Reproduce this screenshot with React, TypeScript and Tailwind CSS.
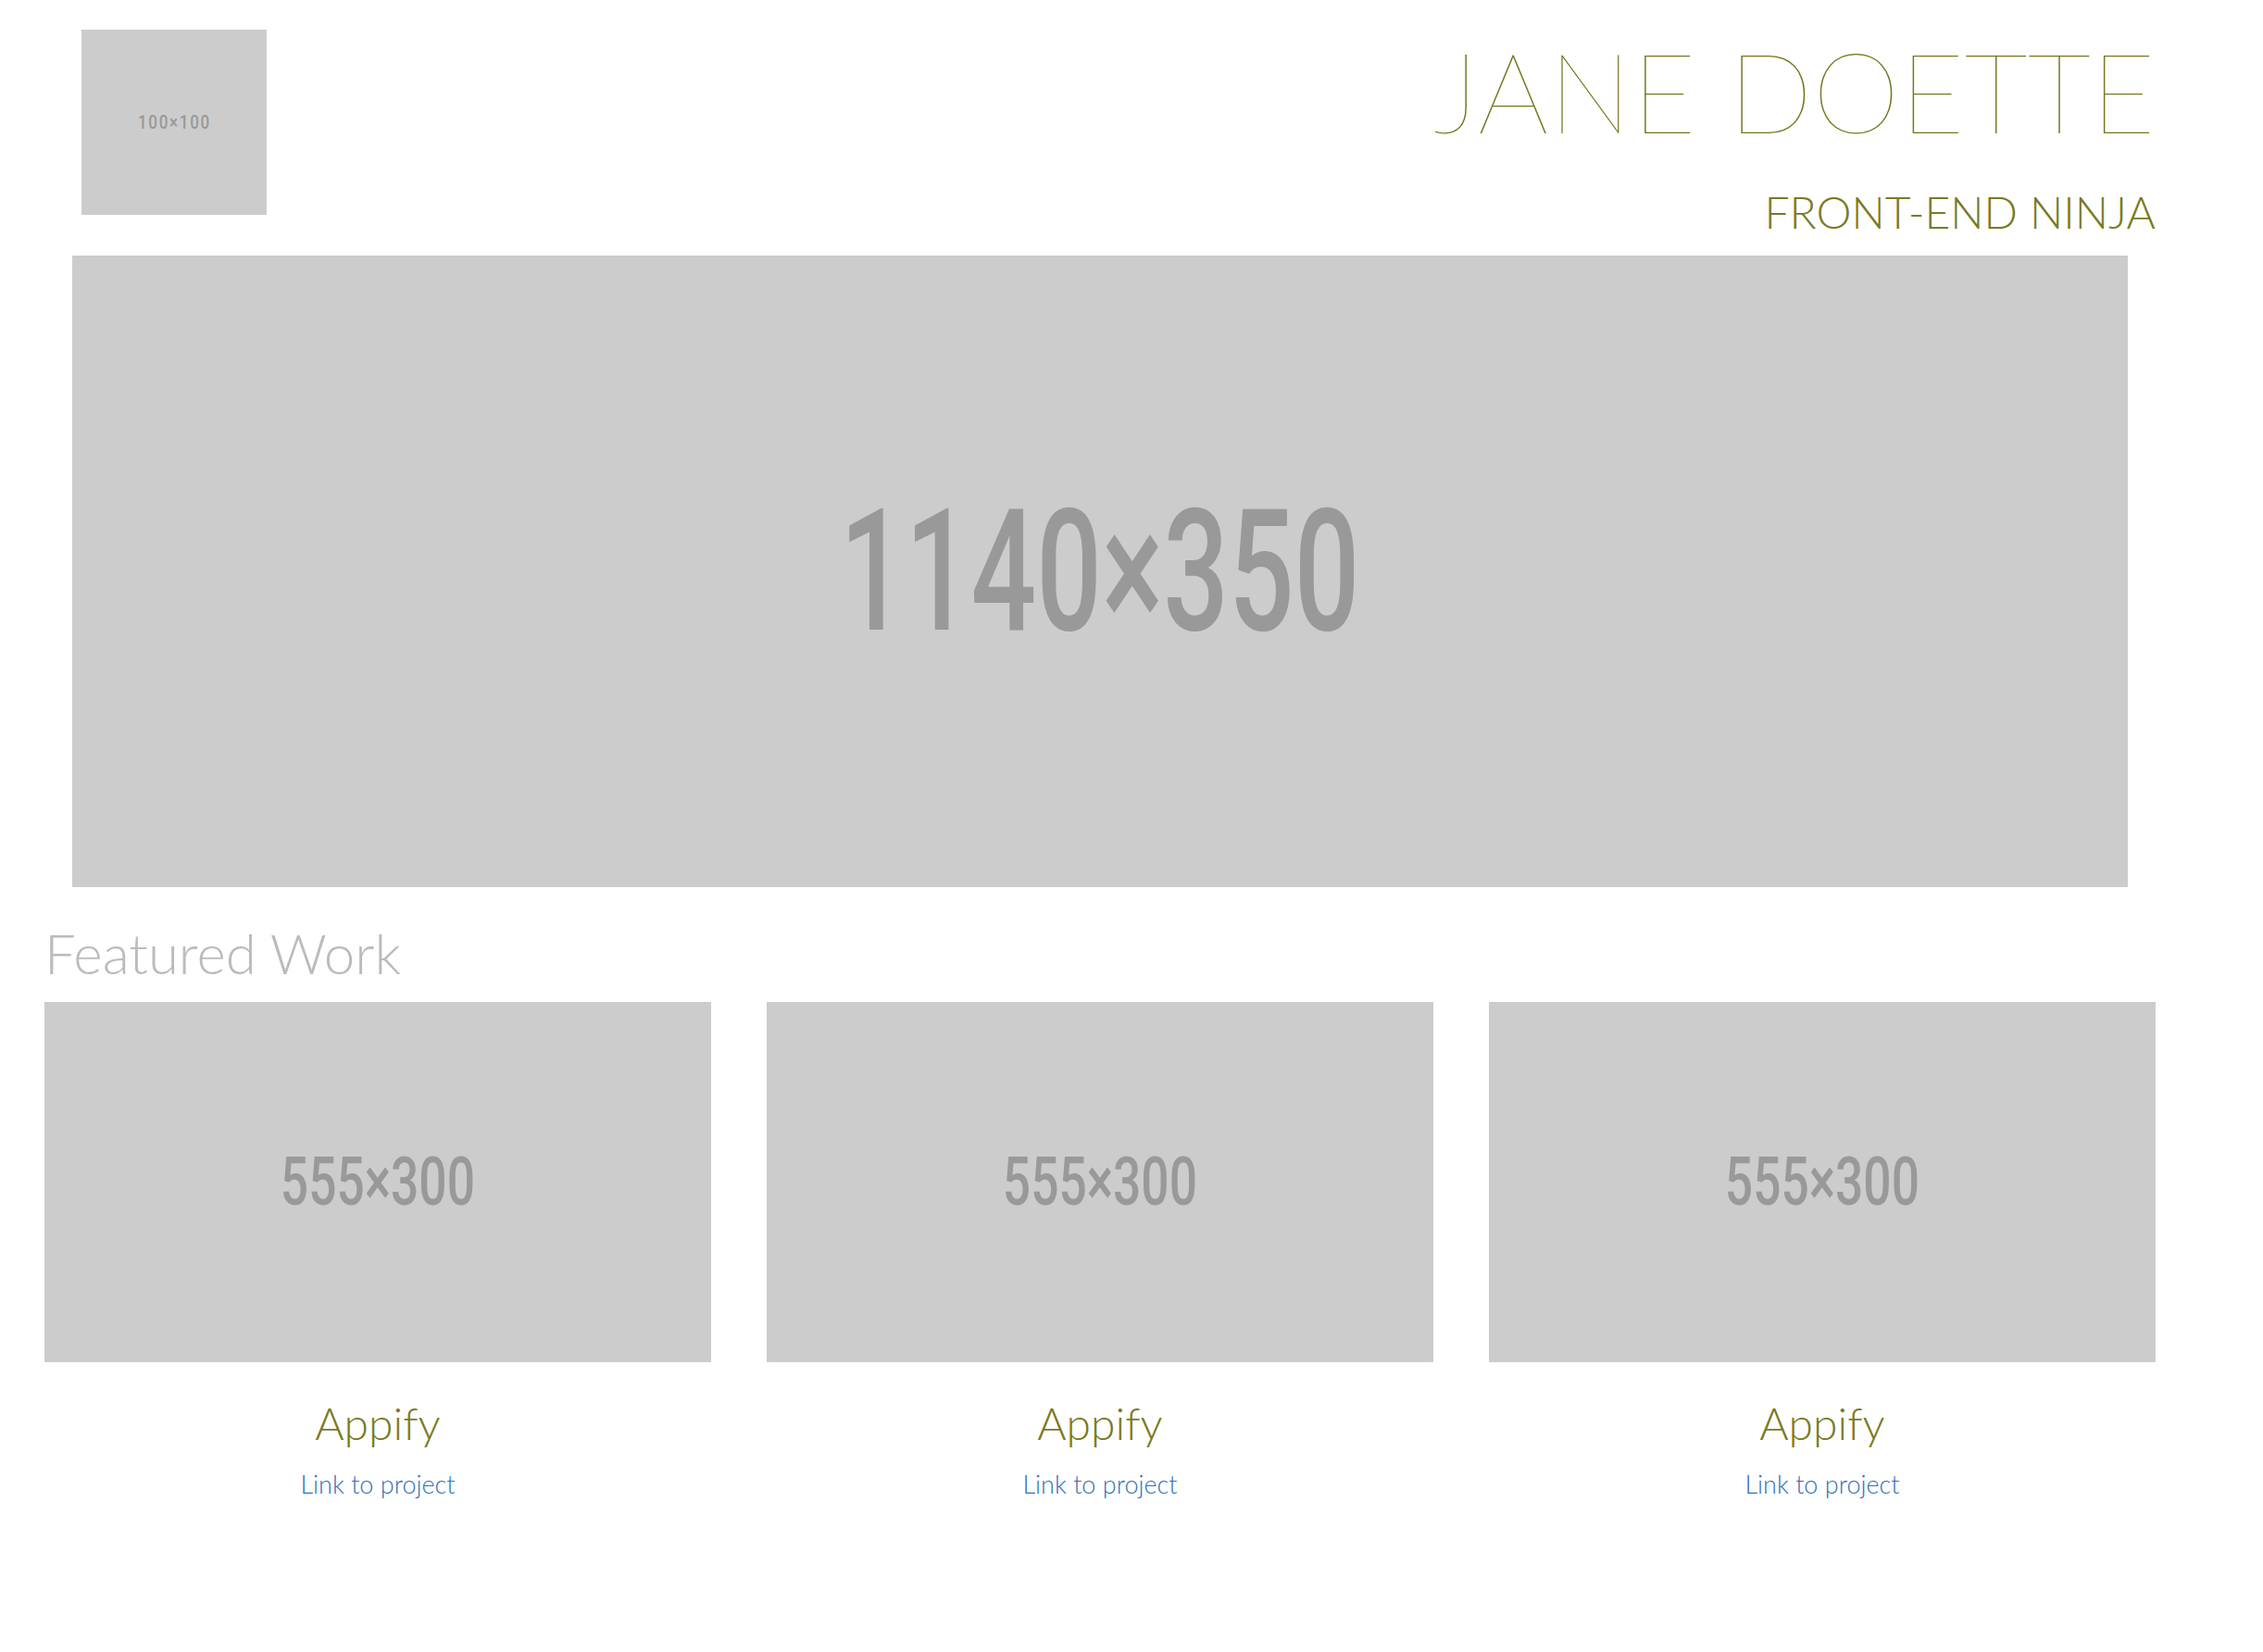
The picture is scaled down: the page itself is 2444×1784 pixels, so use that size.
import React from "react";

function Placeholder({ label, className, textClass }: { label: string; className: string; textClass: string }) {
  return (
    <div className={`flex items-center justify-center overflow-hidden bg-[#cccccc] ${className}`}>
      <span className={`font-['Roboto',sans-serif] leading-none text-[#999999] whitespace-nowrap ${textClass}`}>{label}</span>
    </div>
  );
}

function Project() {
  return (
    <div className="flex w-[720px] flex-col items-center">
      <Placeholder
        label="555×300"
        className="h-[389px] w-[720px]"
        textClass="text-[73px] font-medium scale-x-[0.73]"
      />
      <h3 className="mt-[42px] text-[48px] font-light leading-none text-[#7a7a1f]">Appify</h3>
      <a href="#" className="mt-[28px] text-[27px] font-light leading-none text-[#336fb3]">
        Link to project
      </a>
    </div>
  );
}

export default function App() {
  return (
    <div className="min-h-screen bg-white pl-[48px] pt-[32px] font-['Lato',sans-serif]">
      <div className="w-[2280px]">
        <header className="flex justify-between">
          <Placeholder
            label="100×100"
            className="ml-[40px] h-[200px] w-[200px]"
            textClass="text-[20px] font-medium tracking-[2px] scale-x-[0.85]"
          />
          <div className="flex flex-col items-end pt-[6px]">
            <h1 className="text-[120px] font-extralight leading-none text-[#76761c]">JANE DOETTE</h1>
            <h2 className="mt-[47px] text-[48px] font-light leading-none text-[#7a7a1f]">FRONT-END NINJA</h2>
          </div>
        </header>
        <Placeholder
          label="1140×350"
          className="mx-[30px] mt-[23px] h-[682px]"
          textClass="text-[183px] font-medium scale-x-[0.68]"
        />
        <h2 className="mt-[41px] text-[60px] font-light leading-none text-[#bbbbbb]">Featured Work</h2>
        <div className="mt-[23px] flex gap-[60px]">
          <Project />
          <Project />
          <Project />
        </div>
      </div>
    </div>
  );
}
